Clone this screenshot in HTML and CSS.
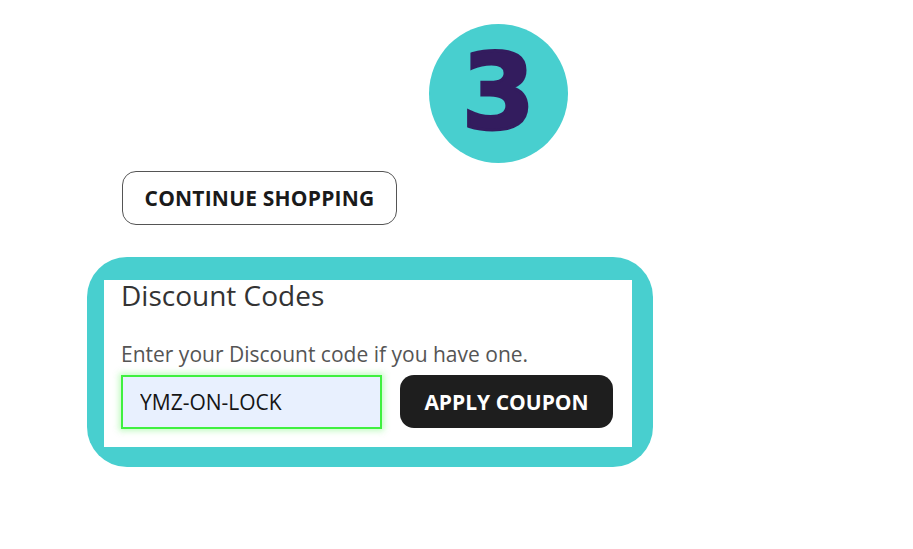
FILE: index.html
```html
<!DOCTYPE html>
<html lang="en">
<head>
<meta charset="utf-8">
<title>Discount Codes</title>
<link rel="stylesheet" href="styles.css">
</head>
<body>
<main class="page">
  <div class="step"><span class="step-num">3</span></div>
  <button class="btn-outline" type="button">CONTINUE SHOPPING</button>
  <section class="highlight">
    <div class="discount">
      <h2 class="discount-title">Discount Codes</h2>
      <p class="discount-help">Enter your Discount code if you have one.</p>
      <div class="discount-row">
        <input class="code-input" type="text" value="YMZ-ON-LOCK">
        <button class="btn-dark" type="button">APPLY COUPON</button>
      </div>
    </div>
  </section>
</main>
</body>
</html>
```
FILE: styles.css
```css
html, body {
  margin: 0;
  padding: 0;
  background: #ffffff;
}
.page {
  display: flex;
  flex-direction: column;
  align-items: flex-start;
  font-family: "Open Sans", "Liberation Sans", sans-serif;
  width: 913px;
  height: 549px;
  overflow: hidden;
}
.step {
  margin: 24px 0 0 429px;
  width: 139px;
  height: 139px;
  border-radius: 50%;
  background: #48cfcf;
  display: flex;
  align-items: center;
  justify-content: center;
}
.step-num {
  font-family: "DejaVu Sans", sans-serif;
  font-weight: 700;
  font-size: 106px;
  line-height: 1;
  color: #331c5e;
  -webkit-text-stroke: 3px #331c5e;
  margin-top: -1px;
}
.btn-outline {
  margin: 8px 0 0 122px;
  width: 275px;
  height: 54px;
  box-sizing: border-box;
  border: 1.5px solid #555555;
  border-radius: 14px;
  background: #ffffff;
  color: #1a1a1a;
  font-family: "Open Sans", sans-serif;
  font-weight: 700;
  font-size: 21px;
  padding: 0;
  letter-spacing: 0.2px;
}
.highlight {
  margin: 32px 0 0 87px;
  width: 566px;
  height: 210px;
  box-sizing: border-box;
  background: #48cfcf;
  border-radius: 40px;
  padding: 23px 21px 20px 17px;
}
.discount {
  background: #ffffff;
  height: 100%;
  padding: 0 0 0 17px;
  box-sizing: border-box;
}
.discount-title {
  margin: 0;
  padding-top: 1px;
  font-weight: 400;
  font-size: 28px;
  line-height: 28px;
  color: #333333;
}
.discount-help {
  margin: 34px 0 0 0;
  font-size: 21px;
  line-height: 22px;
  color: #555555;
}
.discount-row {
  display: flex;
  gap: 18px;
  margin-top: 10px;
}
.code-input {
  width: 261px;
  height: 54px;
  box-sizing: border-box;
  margin: 0;
  border: 2px solid #3ff03f;
  box-shadow: 0 0 6px 2px rgba(80, 240, 80, 0.35);
  background: #e8f0fe;
  padding: 0 0 0 17px;
  font-family: "Open Sans", sans-serif;
  font-size: 21px;
  color: #151515;
  outline: none;
}
.btn-dark {
  width: 213px;
  height: 53px;
  border: none;
  border-radius: 14px;
  background: #1e1e1e;
  color: #ffffff;
  font-family: "Open Sans", sans-serif;
  font-weight: 700;
  font-size: 21px;
  padding: 0;
}
```
